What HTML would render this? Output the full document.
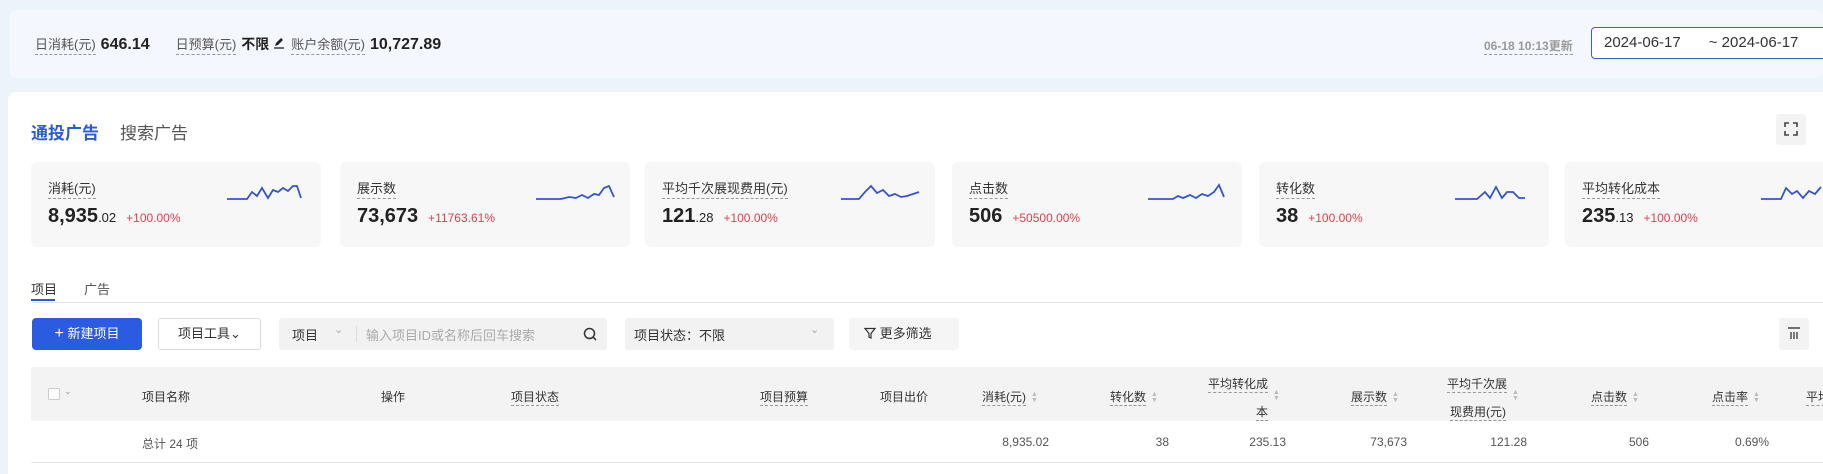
<!DOCTYPE html>
<html><head><meta charset="utf-8"><style>
*{margin:0;padding:0;box-sizing:border-box}
body{width:1823px;height:474px;overflow:hidden;background:#edf3fb;font-family:"Liberation Sans","Noto Sans CJK SC",sans-serif;color:#333;position:relative}
.a{position:absolute;white-space:nowrap}
.dl{border-bottom:1px dashed #999;padding-bottom:1px}
.topbox{left:10px;top:10px;width:1813px;height:68px;background:#f4f8fe;border-radius:6px}
.card{position:absolute;left:8px;top:92px;width:1815px;height:382px;background:#fff;border-radius:8px 0 0 0}
.m{position:absolute;top:162px;width:290px;height:85px;background:#f7f7f8;border-radius:6px}
.m .l{position:absolute;left:17px;top:18px;font-size:13px;color:#333;border-bottom:1px dashed #999;line-height:18px}
.m .v{position:absolute;left:17px;top:43px;font-size:20px;font-weight:bold;color:#222;display:flex;align-items:baseline}
.m .v small{font-size:13px;font-weight:normal}
.m .v i{font-style:normal;font-size:12px;font-weight:normal;color:#e0404a;margin-left:10px}
.m svg{position:absolute;left:196px;top:20px}
.th{font-size:12px;color:#333;top:388px}
.td{font-size:12px;color:#555;top:435px}
.sort{display:inline-block;width:6px;margin-left:5px;vertical-align:middle;color:#bbb;font-size:7px;line-height:6px}
.top{left:35px;top:34px;display:flex;align-items:baseline;font-size:13px;color:#555}
.top b{font-size:16px;color:#222;margin:0 14px 0 5px}
</style></head><body>
<div class="a topbox"></div>
<div class="a top"><span class="dl">日消耗(元)</span><b style="margin-right:26px">646.14</b><span class="dl">日预算(元)</span><b style="font-size:14px;margin-right:4px">不限</b><svg width="13" height="13" viewBox="0 0 13 13" style="margin-right:5px"><path d="M2 10L3 7 8 2 10 4 5 9Z" fill="#222"/><path d="M1 12H11" stroke="#222" stroke-width="1.3"/></svg><span class="dl">账户余额(元)</span><b>10,727.89</b></div>
<div class="a" style="left:1484px;top:37px;font-size:12px;font-weight:bold;color:#999"><span class="dl">06-18 10:13更新</span></div>
<div class="a" style="left:1591px;top:27px;width:240px;height:32px;border:1px solid #3a5fcd;border-radius:4px;background:#fff;font-size:15px;color:#333;padding:6px 0 0 12px">2024-06-17<span style="margin-left:28px">~ 2024-06-17</span></div>

<div class="card"></div>
<div class="a" style="left:31px;top:119px;font-size:17px;font-weight:bold;color:#2d5bd2">通投广告</div>
<div class="a" style="left:120px;top:119px;font-size:17px;color:#555">搜索广告</div>
<div class="a" style="left:1776px;top:114px;width:30px;height:31px;background:#f3f3f3;border-radius:3px"></div>
<svg class="a" style="left:1784px;top:122px" width="14" height="14" viewBox="0 0 14 14" fill="none" stroke="#444" stroke-width="1.6"><path d="M1 5V1H5M9 1H13V5M13 9V13H9M5 13H1V9"/></svg>

<div class="m" style="left:31px"><span class="l">消耗(元)</span><span class="v">8,935<small>.02</small><i>+100.00%</i></span>
<svg width="80" height="22"><path d="M0 17H20L25 10 30 14 35 6 41 16 46 8 51 10 56 6 61 9 66 4 70 4 74 16" fill="none" stroke="#3355c8" stroke-width="1.8"/></svg></div>
<div class="m" style="left:340px"><span class="l">展示数</span><span class="v">73,673<i>+11763.61%</i></span>
<svg width="80" height="22"><path d="M0 17H25L33 15 40 16 46 13 52 16 58 12 63 13 68 6 73 4 78 15" fill="none" stroke="#3355c8" stroke-width="1.8"/></svg></div>
<div class="m" style="left:645px"><span class="l">平均千次展现费用(元)</span><span class="v">121<small>.28</small><i>+100.00%</i></span>
<svg width="80" height="22"><path d="M0 17H18L24 10 30 4 36 11 42 8 48 14 54 12 60 15 66 14 72 12 78 10" fill="none" stroke="#3355c8" stroke-width="1.8"/></svg></div>
<div class="m" style="left:952px"><span class="l">点击数</span><span class="v">506<i>+50500.00%</i></span>
<svg width="80" height="22"><path d="M0 17H25L30 14 35 16 42 13 48 16 54 12 60 14 66 10 71 3 76 15" fill="none" stroke="#3355c8" stroke-width="1.8"/></svg></div>
<div class="m" style="left:1259px"><span class="l">转化数</span><span class="v">38<i>+100.00%</i></span>
<svg width="80" height="22"><path d="M0 17H22L30 10 35 16 41 5 47 16 52 10 58 10 64 16 70 16" fill="none" stroke="#3355c8" stroke-width="1.8"/></svg></div>
<div class="m" style="left:1565px;width:270px"><span class="l">平均转化成本</span><span class="v">235<small>.13</small><i>+100.00%</i></span>
<svg width="80" height="22"><path d="M0 17H20L25 6 31 12 36 9 42 16 48 9 54 12 60 5" fill="none" stroke="#3355c8" stroke-width="1.8"/></svg></div>

<div class="a" style="left:31px;top:279px;font-size:13px;color:#333">项目</div>
<div class="a" style="left:84px;top:279px;font-size:13px;color:#555">广告</div>
<div class="a" style="left:31px;top:299px;width:24px;height:2px;background:#2d5bd2"></div>
<div class="a" style="left:31px;top:302px;width:1792px;height:1px;background:#e8e8e8"></div>

<div class="a" style="left:32px;top:318px;width:110px;height:32px;background:#2b5be0;border-radius:4px;color:#fff;font-size:13px;text-align:center;line-height:32px"><span style="font-size:16px">+</span> 新建项目</div>
<div class="a" style="left:158px;top:318px;width:103px;height:32px;border:1px solid #ddd;border-radius:3px;color:#333;font-size:13px;text-align:center;line-height:30px">项目工具⌄</div>
<div class="a" style="left:279px;top:318px;width:328px;height:32px;background:#f2f2f2;border-radius:3px"></div>
<div class="a" style="left:292px;top:325px;font-size:13px;color:#333">项目</div>
<div class="a" style="left:334px;top:323px;font-size:11px;color:#aaa">⌄</div>
<div class="a" style="left:356px;top:326px;width:1px;height:16px;background:#ddd"></div>
<div class="a" style="left:366px;top:325px;font-size:13px;color:#aaa">输入项目ID或名称后回车搜索</div>
<svg class="a" style="left:583px;top:327px" width="14" height="14" viewBox="0 0 14 14" fill="none" stroke="#333" stroke-width="1.5"><circle cx="6.5" cy="6.5" r="5"/><path d="M10 10L13 13"/></svg>
<div class="a" style="left:625px;top:318px;width:209px;height:32px;background:#f2f2f2;border-radius:3px"></div>
<div class="a" style="left:634px;top:325px;font-size:13px;color:#333">项目状态：不限</div>
<div class="a" style="left:810px;top:323px;font-size:11px;color:#aaa">⌄</div>
<div class="a" style="left:849px;top:318px;width:110px;height:32px;background:#f5f5f5;border-radius:3px;font-size:13px;color:#333;line-height:32px;padding-left:15px"><svg width="12" height="12" viewBox="0 0 12 12" style="vertical-align:-1px"><path d="M1 1.5H11L7 6.5V11L5 10V6.5Z" fill="none" stroke="#333" stroke-width="1.2"/></svg> 更多筛选</div>
<div class="a" style="left:1779px;top:318px;width:30px;height:32px;background:#f3f3f3;border-radius:3px"></div>
<svg class="a" style="left:1787px;top:326px" width="14" height="14" viewBox="0 0 14 14" stroke="#444" stroke-width="1.4"><path d="M1 2H13M4 6V13M7 6V13M10 6V13"/></svg>

<div class="a" style="left:31px;top:367px;width:1792px;height:54px;background:#f3f3f3"></div>
<div class="a" style="left:48px;top:388px;width:12px;height:12px;border:1px solid #ccc;background:#fff;border-radius:2px"></div>
<div class="a" style="left:64px;top:386px;font-size:9px;color:#999">⌄</div>
<div class="a th" style="left:142px">项目名称</div>
<div class="a th" style="left:381px">操作</div>
<div class="a th" style="left:511px"><span class="dl">项目状态</span></div>
<div class="a th" style="left:760px"><span class="dl">项目预算</span></div>
<div class="a th" style="left:880px">项目出价</div>
<div class="a th" style="left:982px"><span class="dl">消耗(元)</span><span class="sort">▲<br>▼</span></div>
<div class="a th" style="left:1110px"><span class="dl">转化数</span><span class="sort">▲<br>▼</span></div>
<div class="a" style="left:1208px;top:374px;font-size:12px;text-align:right;line-height:20px"><span class="dl">平均转化成</span><span class="sort" style="vertical-align:-12px">▲<br>▼</span><br><span class="dl" style="margin-right:11px">本</span></div>
<div class="a th" style="left:1351px"><span class="dl">展示数</span><span class="sort">▲<br>▼</span></div>
<div class="a" style="left:1447px;top:374px;font-size:12px;line-height:20px"><span class="dl">平均千次展</span><span class="sort" style="vertical-align:-12px">▲<br>▼</span><br><span class="dl" style="margin-left:3px">现费用(元)</span></div>
<div class="a th" style="left:1591px"><span class="dl">点击数</span><span class="sort">▲<br>▼</span></div>
<div class="a th" style="left:1712px"><span class="dl">点击率</span><span class="sort">▲<br>▼</span></div>
<div class="a th" style="left:1806px"><span class="dl">平均</span></div>

<div class="a td" style="left:142px">总计 24 项</div>
<div class="a td" style="right:774px">8,935.02</div>
<div class="a td" style="right:654px">38</div>
<div class="a td" style="right:537px">235.13</div>
<div class="a td" style="right:416px">73,673</div>
<div class="a td" style="right:296px">121.28</div>
<div class="a td" style="right:174px">506</div>
<div class="a td" style="right:54px">0.69%</div>
<div class="a" style="left:31px;top:462px;width:1792px;height:1px;background:#e6e6e6"></div>
</body></html>
